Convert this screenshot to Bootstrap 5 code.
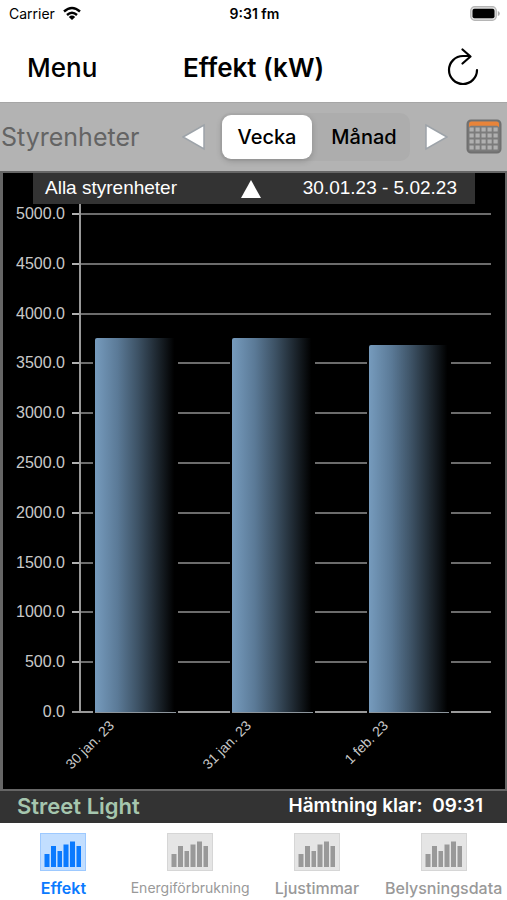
<!DOCTYPE html>
<html lang="sv">
<head>
<meta charset="utf-8">
<meta name="viewport" content="width=device-width, initial-scale=1">
<title>Effekt (kW)</title>
<link href="https://cdn.jsdelivr.net/npm/bootstrap@5.3.0/dist/css/bootstrap.min.css" rel="stylesheet">
<style>
  body { font-family: Inter, "Liberation Sans", sans-serif; color: #000; background: #fff; }
  button.btn { color: inherit; }
  .status-bar { height: 27px; font-size: 14px; padding: 0 7px 0 9px; }
  .clock { font-weight: 600; }
  .side { flex: 1 1 0; }
  .title-bar { height: 75px; padding: 6px 27px 0; }
  .title-bar h1, .title-bar .menu-btn { font-size: 26px; line-height: 32px; font-weight: 600; }
  .title-bar .menu-btn { font-weight: 500; }
  .tool-bar { min-height: 69px; background: #b3b3b3; padding: 0 5px 0 1px; border-top: 1px solid #a6a6a6; }
  .tool-bar .units-btn { font-size: 25px; line-height: 32px; color: #646464; }
  .period-group { gap: 14px; margin-right: 18px; }
  .segments { background: #adadad; border-radius: 10px; padding: 2px; }
  .segments .btn { width: 90px; padding: 0; font-size: 20px; line-height: 44px; font-weight: 500; border: 0; border-radius: 9px; color: #000; }
  .segments .btn-check:checked + .btn { background: #fff; color: #000; box-shadow: 0 2px 6px rgba(0,0,0,.2); }
  .segments .btn:last-child { width: 96px; padding-left: 8px; }
  .chart-panel { background: #000; color: #c9c9c9; border: solid #666; border-width: 2px 2px 2px 3px; font-family: "Liberation Sans", Arial, sans-serif; }
  .range-strip { height: 31px; margin: 0 30px; padding: 0 18px 0 12px; background: #333; color: #fff; font-size: 19px; line-height: 29px; }
  .plot { display: grid; grid-template-columns: 77px 1fr; grid-template-rows: 1fr 67px; margin-right: 14px; font-size: 16px; line-height: 20px; }
  .scale-rows { grid-area: 1 / 1 / 2 / 3; }
  .scale-row { height: 20px; }
  .scale-label { width: 62px; margin-right: 7px; text-align: right; }
  .scale-line { height: 2px; background: linear-gradient(90deg, #b0b0b0 8px, #6c6c6c 8px); }
  .scale-row:last-child .scale-line { background: #999; }
  .bars { grid-area: 1 / 2 / 2 / 3; border-left: 2px solid #999; margin-bottom: 9px; padding-top: 10px; margin-left: -1px; }
  .bar-slot { flex: 1 1 0; padding-left: 3%; }
  .bar-box { width: 68%; padding: 0 2px; background: #000; }
  .bar-fill { height: 100%; border-radius: 2px 2px 0 0; background: linear-gradient(90deg, #769bbd 0, #5b7a97 28%, #3d5265 53%, #192128 80%, #000 98%); border-bottom: 1px solid #8d959c; }
  .dates { grid-area: 2 / 2 / 3 / 3; margin-top: -5px; font-size: 14px; line-height: 12px; }
  .date-slot { flex: 1 1 0; }
  .date-anchor { width: 31px; }
  .date-anchor span { transform: rotate(-45deg); transform-origin: right center; white-space: nowrap; }
  .info-strip { min-height: 32px; background: #333; padding: 0 24px 0 17px; }
  .place { font-size: 22px; line-height: 30px; font-weight: 600; color: #a6c6ae; }
  .fetched { font-size: 19px; line-height: 30px; font-weight: 600; color: #fff; white-space: pre; }
  .tabs { min-height: 77px; font-size: 16px; line-height: 20px; font-weight: 500; }
  .tabs a { flex: 1 1 0; min-width: 0; color: #999; padding: 10px 0 0; gap: 7px; }
  .tabs a.active { color: #0a7aff; font-weight: 600; }
  .tabs .long-name { font-size: 14px; font-weight: 400; }
</style>
<script src="https://cdn.jsdelivr.net/npm/bootstrap@5.3.0/dist/js/bootstrap.bundle.min.js"></script>
</head>
<body>
<svg class="d-none" aria-hidden="true">
  <symbol id="chart-icon" viewBox="0 0 46 38">
    <rect width="46" height="38" fill="currentColor" opacity=".25"/>
    <rect x=".5" y=".5" width="45" height="37" fill="none" stroke="currentColor" opacity=".2"/>
    <path fill="currentColor" d="M4.500 21h5v13h-5zM11 13h5v21h-5zM17.500 18h4.500v16h-4.500zM23.500 11.500h5v22.500h-5zM30 8.500h5v25.500h-5zM36.500 13h4.500v21h-4.500z"/>
  </symbol>
</svg>
<div class="min-vh-100 d-flex flex-column">
  <header>
    <div class="status-bar d-flex align-items-center">
      <div class="side d-flex align-items-center">
        <span>Carrier</span>
        <svg class="ms-2" width="18" height="15" viewBox="0 0 18 15" fill="none" stroke="#000" stroke-width="2.400" aria-hidden="true">
          <path d="M1 5.500Q9 -1.500 17 5.500M4 9Q9 4.500 14 9"/><path d="M9 14L5.800 10.900Q9 8 12.200 10.900z" fill="#000" stroke="none"/>
        </svg>
      </div>
      <div class="clock">9:31 fm</div>
      <div class="side d-flex justify-content-end">
        <svg width="30" height="15" viewBox="0 0 30 15" aria-hidden="true">
          <rect x=".700" y=".700" width="25.600" height="13.600" rx="4" fill="#ddd" stroke="#b5b5b5" stroke-width="1.200"/>
          <rect x="2.500" y="2.800" width="22" height="9.500" rx="2" fill="#000"/><path d="M27.800 5q2 .500 2 2.500t-2 2.500z" fill="#aaa"/>
        </svg>
      </div>
    </div>
    <div class="title-bar d-flex align-items-center">
      <div class="side"><button type="button" class="menu-btn btn border-0 p-0">Menu</button></div>
      <h1 class="m-0">Effekt (kW)</h1>
      <div class="side d-flex justify-content-end">
        <button type="button" class="btn border-0 p-0 lh-1" aria-label="Uppdatera">
          <svg class="d-block" width="34" height="40" viewBox="0 0 34 40" fill="none" stroke="#000" stroke-width="2.200" stroke-linecap="round" stroke-linejoin="round">
            <path d="M31 22A14 14 0 1 1 17 8H24M16.500 1.500L24.500 8.500L16.500 15.500"/>
          </svg>
        </button>
      </div>
    </div>
  </header>

  <div class="tool-bar d-flex align-items-center">
    <button type="button" class="units-btn btn border-0 p-0">Styrenheter</button>
    <div class="period-group d-flex align-items-center ms-auto">
      <button type="button" class="btn border-0 p-0 lh-1" aria-label="Föregående">
        <svg width="24" height="28" viewBox="0 0 24 28"><path d="M1 14L22 2V26z" fill="#fff" stroke="#9da3a9" stroke-width="1.500"/></svg>
      </button>
      <div class="segments d-flex" role="group" aria-label="Period">
        <input type="radio" class="btn-check" name="period" id="week" checked><label class="btn" for="week">Vecka</label>
        <input type="radio" class="btn-check" name="period" id="month"><label class="btn" for="month">Månad</label>
      </div>
      <button type="button" class="btn border-0 p-0 lh-1" aria-label="Nästa">
        <svg width="24" height="28" viewBox="0 0 24 28"><path d="M23 14L2 2V26z" fill="#fff" stroke="#9da3a9" stroke-width="1.500"/></svg>
      </button>
    </div>
    <button type="button" class="btn border-0 p-0 lh-1" aria-label="Kalender">
      <svg width="36" height="36" viewBox="0 0 36 36">
        <rect x="1.500" y="1.500" width="33" height="32" rx="3.500" fill="#7c7c7c" stroke="#707070" stroke-width="2"/>
        <path d="M3 8V5Q3 2.500 5.500 2.500H30.500Q33 2.500 33 5V8L31 6.800H5z" fill="#e8843a"/>
        <g stroke="#b0b0b0" stroke-width="4.200" stroke-dasharray="4.200 1.800"><path d="M3.500 10.500H33M3.500 16.500H33M3.500 22.500H33M3.500 28.500H33"/></g>
      </svg>
    </button>
  </div>

  <main class="chart-panel flex-grow-1 d-flex flex-column">
    <div class="range-strip d-flex">
      <span class="side">Alla styrenheter</span>
      <button type="button" class="btn border-0 p-0 lh-1 align-self-center" aria-label="Visa urval"><svg class="d-block" width="20" height="18" viewBox="0 0 20 18"><path d="M10 0L20 18H0z" fill="#fff"/></svg></button>
      <span class="side text-end">30.01.23 - 5.02.23</span>
    </div>
    <div class="plot flex-grow-1">
      <div class="scale-rows d-flex flex-column justify-content-between">
        <div class="scale-row d-flex align-items-center"><span class="scale-label">5000.0</span><span class="scale-line flex-grow-1"></span></div>
        <div class="scale-row d-flex align-items-center"><span class="scale-label">4500.0</span><span class="scale-line flex-grow-1"></span></div>
        <div class="scale-row d-flex align-items-center"><span class="scale-label">4000.0</span><span class="scale-line flex-grow-1"></span></div>
        <div class="scale-row d-flex align-items-center"><span class="scale-label">3500.0</span><span class="scale-line flex-grow-1"></span></div>
        <div class="scale-row d-flex align-items-center"><span class="scale-label">3000.0</span><span class="scale-line flex-grow-1"></span></div>
        <div class="scale-row d-flex align-items-center"><span class="scale-label">2500.0</span><span class="scale-line flex-grow-1"></span></div>
        <div class="scale-row d-flex align-items-center"><span class="scale-label">2000.0</span><span class="scale-line flex-grow-1"></span></div>
        <div class="scale-row d-flex align-items-center"><span class="scale-label">1500.0</span><span class="scale-line flex-grow-1"></span></div>
        <div class="scale-row d-flex align-items-center"><span class="scale-label">1000.0</span><span class="scale-line flex-grow-1"></span></div>
        <div class="scale-row d-flex align-items-center"><span class="scale-label">500.0</span><span class="scale-line flex-grow-1"></span></div>
        <div class="scale-row d-flex align-items-center"><span class="scale-label">0.0</span><span class="scale-line flex-grow-1"></span></div>
      </div>
      <div class="bars d-flex">
        <div class="bar-slot d-flex align-items-end"><div class="bar-box" style="height:75.1%"><div class="bar-fill"></div></div></div>
        <div class="bar-slot d-flex align-items-end"><div class="bar-box" style="height:75.1%"><div class="bar-fill"></div></div></div>
        <div class="bar-slot d-flex align-items-end"><div class="bar-box" style="height:73.7%"><div class="bar-fill"></div></div></div>
      </div>
      <div class="dates d-flex">
        <div class="date-slot"><div class="date-anchor d-flex justify-content-end"><span>30 jan. 23</span></div></div>
        <div class="date-slot"><div class="date-anchor d-flex justify-content-end"><span>31 jan. 23</span></div></div>
        <div class="date-slot"><div class="date-anchor d-flex justify-content-end"><span>1 feb. 23</span></div></div>
      </div>
    </div>
  </main>

  <div class="info-strip d-flex justify-content-between">
    <span class="place">Street Light</span>
    <span class="fetched">Hämtning klar:  09:31</span>
  </div>

  <nav class="tabs d-flex" aria-label="Vyer">
    <a href="#effekt" class="active d-flex flex-column align-items-center text-decoration-none" aria-current="page"><svg width="46" height="38"><use href="#chart-icon"/></svg>Effekt</a>
    <a href="#energi" class="d-flex flex-column align-items-center text-decoration-none"><svg width="46" height="38"><use href="#chart-icon"/></svg><span class="long-name">Energiförbrukning</span></a>
    <a href="#ljus" class="d-flex flex-column align-items-center text-decoration-none"><svg width="46" height="38"><use href="#chart-icon"/></svg>Ljustimmar</a>
    <a href="#data" class="d-flex flex-column align-items-center text-decoration-none"><svg width="46" height="38"><use href="#chart-icon"/></svg>Belysningsdata</a>
  </nav>
</div>
</body>
</html>
